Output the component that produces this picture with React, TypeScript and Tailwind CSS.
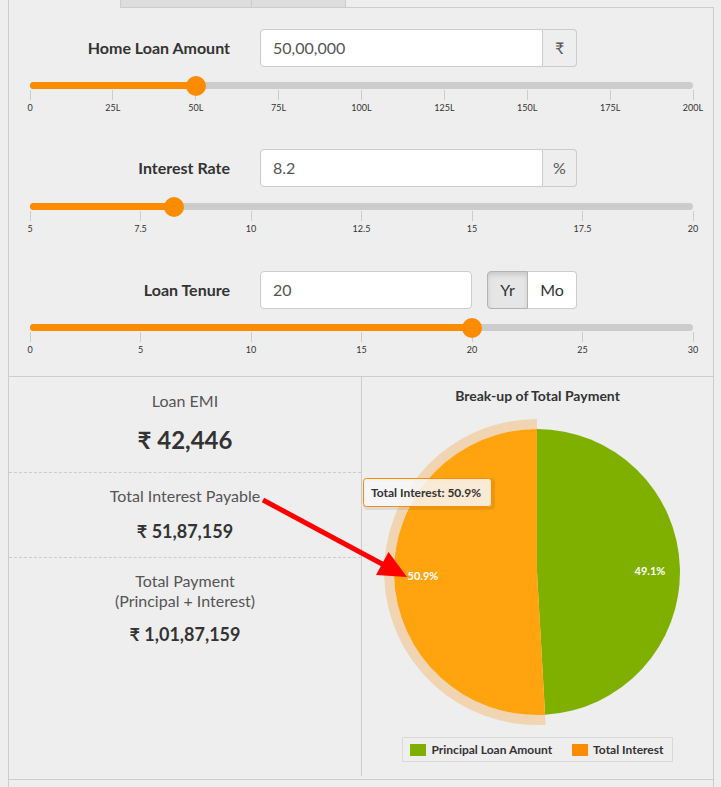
import React from "react";

type SliderProps = { pct: number; labels: string[] };

function Slider({ pct, labels }: SliderProps) {
  return (
    <div className="ml-[21px] w-[663px]">
      <div className="relative h-[7px] rounded-full bg-[#cccccc]">
        <div className="h-full rounded-full bg-[#fb8c00]" style={{ width: `${pct}%` }} />
        <div
          className="absolute top-1/2 h-[20px] w-[20px] -translate-x-1/2 -translate-y-1/2 rounded-full bg-[#fb8c00]"
          style={{ left: `${pct}%` }}
        />
      </div>
      <div className="mt-[1px] flex justify-between">
        {labels.map((l) => (
          <div key={l} className="flex w-0 flex-col items-center">
            <div className="h-[10px] w-px shrink-0 bg-[#cccccc]" />
            <div className="mt-[3px] whitespace-nowrap text-[9px] leading-[10px] text-[#333]">{l}</div>
          </div>
        ))}
      </div>
    </div>
  );
}

function Label({ children }: { children: React.ReactNode }) {
  return (
    <div className="w-[221px] text-right text-[16px] font-bold leading-[20px] text-[#333]">{children}</div>
  );
}

function AddonInput({ value, addon }: { value: string; addon: string }) {
  return (
    <div className="ml-[30px] flex h-[38px]">
      <div className="flex w-[283px] items-center rounded-l-[4px] border border-[#cccccc] bg-white pl-[12px] text-[16px] text-[#555]">
        {value}
      </div>
      <div className="flex w-[34px] items-center justify-center rounded-r-[4px] border border-l-0 border-[#cccccc] bg-[#eeeeee] text-[16px] text-[#555]">
        {addon}
      </div>
    </div>
  );
}

export default function App() {
  const cx = 175;
  const cy = 167;
  return (
    <div className="relative min-h-[787px] w-[721px] overflow-hidden bg-[#eeeeee] [font-family:Lato,'Liberation_Sans',sans-serif]">
      <div className="ml-[8px] w-[706px]">
        {/* tabs strip */}
        <div className="flex h-[8px]">
          <div className="h-[8px] w-[112px] border-l border-[#cccccc]" />
          <div className="h-[8px] w-[131px] border-b border-l border-[#cccccc] bg-[#dddddd]" />
          <div className="h-[8px] w-[95px] border-b border-l border-r border-[#cccccc] bg-[#dddddd]" />
          <div className="h-[8px] flex-1 border-b border-[#cccccc]" />
        </div>

        {/* body */}
        <div className="border-l border-r border-[#cccccc]">
          <div className="pt-[21px]">
            <div className="flex h-[38px] items-center">
              <Label>Home Loan Amount</Label>
              <AddonInput value="50,00,000" addon="₹" />
            </div>
            <div className="mt-[15px]">
              <Slider pct={25} labels={["0", "25L", "50L", "75L", "100L", "125L", "150L", "175L", "200L"]} />
            </div>

            <div className="mt-[36px] flex h-[38px] items-center">
              <Label>Interest Rate</Label>
              <AddonInput value="8.2" addon="%" />
            </div>
            <div className="mt-[16px]">
              <Slider pct={21.7} labels={["5", "7.5", "10", "12.5", "15", "17.5", "20"]} />
            </div>

            <div className="mt-[37px] flex h-[38px] items-center">
              <Label>Loan Tenure</Label>
              <div className="ml-[30px] flex h-[38px] w-[212px] items-center rounded-[4px] border border-[#cccccc] bg-white pl-[12px] text-[16px] text-[#555]">
                20
              </div>
              <div className="ml-[15px] flex h-[38px]">
                <div className="flex w-[41px] items-center justify-center rounded-l-[4px] border border-[#b3b3b3] bg-[#e6e6e6] text-[16px] text-[#333] shadow-[inset_0_3px_5px_rgba(0,0,0,0.125)]">
                  Yr
                </div>
                <div className="flex w-[49px] items-center justify-center rounded-r-[4px] border border-l-0 border-[#cccccc] bg-white text-[16px] text-[#333]">
                  Mo
                </div>
              </div>
            </div>
            <div className="mt-[15px]">
              <Slider pct={66.67} labels={["0", "5", "10", "15", "20", "25", "30"]} />
            </div>
          </div>

          {/* results */}
          <div className="mt-[21px] flex h-[404px] border-b border-t border-[#cccccc] pb-[3px]">
            <div className="w-[353px] border-r border-[#cccccc] text-center">
              <div className="h-[96px] border-b border-dashed border-[#cccccc] pt-[14px]">
                <div className="text-[16px] leading-[20px] text-[#555]">Loan EMI</div>
                <div className="mt-[14px] text-[24px] font-bold leading-[30px] text-[#333]">₹ 42,446</div>
              </div>
              <div className="h-[85px] border-b border-dashed border-[#cccccc] pt-[13px]">
                <div className="text-[16px] leading-[20px] text-[#555]">Total Interest Payable</div>
                <div className="mt-[13px] text-[18px] font-bold leading-[24px] text-[#333]">₹ 51,87,159</div>
              </div>
              <div className="pt-[13px]">
                <div className="text-[16px] leading-[20px] text-[#555]">Total Payment</div>
                <div className="text-[16px] leading-[20px] text-[#555]">(Principal + Interest)</div>
                <div className="mt-[11px] text-[18px] font-bold leading-[24px] text-[#333]">₹ 1,01,87,159</div>
              </div>
            </div>

            <div className="flex-1">
              <div className="pt-[10px] text-center text-[14px] font-bold leading-[18px] text-[#333]">
                Break-up of Total Payment
              </div>
              <svg width="351" height="325" viewBox="0 0 351 325" className="block">
                {/* halo */}
                <path
                  d={`M183.64,319.76 A153,153 0 1 1 ${cx},14 L${cx},24 A143,143 0 1 0 183.08,309.77 Z`}
                  fill="#fb8c00"
                  fillOpacity="0.25"
                />
                <path d={`M${cx},${cy} L${cx},24 A143,143 0 0 1 183.08,309.77 Z`} fill="#7fb000" />
                <path d={`M${cx},${cy} L183.08,309.77 A143,143 0 1 1 ${cx},24 Z`} fill="#ffa40f" />
                <text x="288" y="170" textAnchor="middle" fill="#fff" fontSize="11" fontWeight="700" fontFamily="Lato, sans-serif">
                  49.1%
                </text>
                <text x="61" y="175" textAnchor="middle" fill="#fff" fontSize="11" fontWeight="700" fontFamily="Lato, sans-serif">
                  50.9%
                </text>
                {/* tooltip */}
                <rect x="2.5" y="74.5" width="129" height="29" rx="3" fill="none" stroke="#000" strokeOpacity="0.08" strokeWidth="3" />
                <rect x="1.5" y="73.5" width="128" height="28" rx="3" fill="#f7f7f7" fillOpacity="0.85" stroke="#fb8c00" strokeWidth="1" />
                <text x="9" y="92" fill="#333" fontSize="12" fontWeight="700" fontFamily="Lato, sans-serif">
                  Total Interest: 50.9%
                </text>
              </svg>
              <div className="mt-[7px] flex justify-center">
                <div className="flex h-[25px] items-center border border-[#d9d9d9] pl-[7px] pr-[8px]">
                  <span className="h-[12px] w-[16px] bg-[#7fb000]" />
                  <span className="ml-[5px] text-[12px] font-bold leading-[14px] text-[#333]">Principal Loan Amount</span>
                  <span className="ml-[20px] h-[12px] w-[16px] bg-[#fb8c00]" />
                  <span className="ml-[5px] text-[12px] font-bold leading-[14px] text-[#333]">Total Interest</span>
                </div>
              </div>
            </div>
          </div>

          <div className="pt-[3px] text-center text-[14px] leading-[20px] text-[#999]">
            Calculate your home loan EMI and know the break-up of your total payment
          </div>
        </div>
      </div>

      {/* red annotation arrow */}
      <svg className="pointer-events-none absolute left-0 top-0" width="721" height="787" viewBox="0 0 721 787">
        <line x1="263" y1="500" x2="384" y2="565" stroke="#ff0000" strokeWidth="5" />
        <polygon points="407,577 376,575 388.5,552" fill="#ff0000" />
      </svg>
    </div>
  );
}
